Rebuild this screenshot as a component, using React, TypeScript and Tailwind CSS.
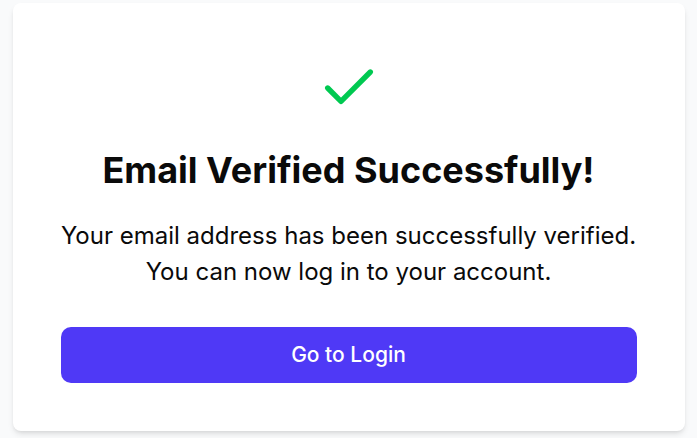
import { Check } from 'lucide-react';

export default function App() {
  return (
    <div className="min-h-screen bg-gray-50 pt-[3px] font-['Inter',sans-serif]">
      <div className="mx-auto max-w-2xl rounded-lg bg-white p-12 text-center shadow-md">
        <div className="mt-[5px] flex justify-center">
          <Check className="h-16 w-16 text-green-500" strokeWidth={2} />
        </div>
        <h1 className="mt-[30px] text-4xl font-bold text-[#0a0a0a]">Email Verified Successfully!</h1>
        <p className="mt-7 text-2xl leading-normal text-[#0a0a0a]">
          Your email address has been successfully verified.
          <br />
          You can now log in to your account.
        </p>
        <button className="mt-[37px] w-full rounded-[10px] bg-indigo-600 py-[14px] text-[21px] leading-7 font-medium text-white">
          Go to Login
        </button>
      </div>
    </div>
  );
}
